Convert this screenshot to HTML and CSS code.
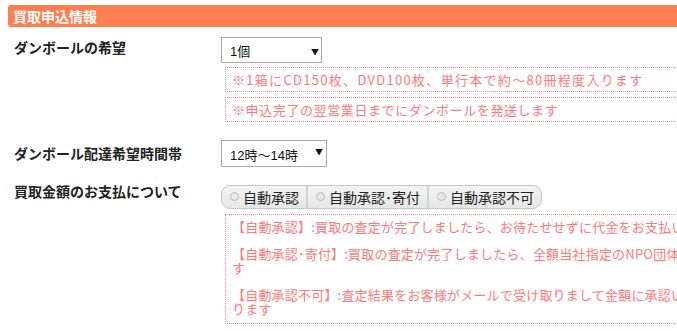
FILE: index.html
```html
<!DOCTYPE html>
<html lang="ja">
<head>
    <meta charset="UTF-8">
    <title>買取申込情報</title>
    <link rel="stylesheet" href="styles.css">
</head>
<body>
    <div class="form">
        <h3 class="form-title">買取申込情報</h3>

        <!-- ダンボール -->
        <div class="row row-box">
            <div class="label">ダンボールの希望</div>
            <div class="field">
                <div class="select select-count">
                    <select>
                        <option>1個</option>
                        <option>2個</option>
                        <option>3個</option>
                    </select>
                </div>
                <p class="note note-wide">※1箱にCD150枚、DVD100枚、単行本で約～80冊程度入ります</p>
                <p class="note">※申込完了の翌営業日までにダンボールを発送します</p>
            </div>
        </div>

        <!-- 配達時間 -->
        <div class="row row-time">
            <div class="label">ダンボール配達希望時間帯</div>
            <div class="field">
                <div class="select select-time">
                    <select>
                        <option>12時～14時</option>
                        <option>14時～16時</option>
                    </select>
                </div>
            </div>
        </div>

        <!-- お支払 -->
        <div class="row row-pay">
            <div class="label">買取金額のお支払について</div>
            <div class="field">
                <div class="choice">
                    <label class="choice-item"><span class="radio"></span>自動承認</label>
                    <label class="choice-item"><span class="radio"></span>自動承認･寄付</label>
                    <label class="choice-item"><span class="radio"></span>自動承認不可</label>
                </div>
                <div class="note note-pay">
                    <p>【自動承認】:買取の査定が完了しましたら、お待たせせずに代金をお支払いいたします</p>
                    <p>【自動承認･寄付】:買取の査定が完了しましたら、全額当社指定のNPO団体へ寄付いたしま<br>す</p>
                    <p>【自動承認不可】:査定結果をお客様がメールで受け取りまして金額に承認いただいてからお支払いとな<br>ります</p>
                </div>
            </div>
        </div>
    </div>
</body>
</html>
```

FILE: styles.css
```css
html {
    overflow-x: hidden;
}
body {
    margin: 0;
    font-family: "Noto Sans CJK JP", sans-serif;
    color: #222;
    background: #fff;
}
.form {
    width: 900px;
    padding: 5px 0 0 8px;
}
.form-title {
    margin: 0;
    height: 22px;
    line-height: 22px;
    padding-left: 5px;
    background: #ff7f50;
    border-radius: 3px;
    color: #fff;
    font-size: 14px;
    font-weight: bold;
}
.row {
    display: flex;
}
.row-box { margin-top: 10px; }
.row-time { margin-top: 18px; }
.row-pay { margin-top: 15px; }
.label {
    width: 207px;
    padding-left: 6px;
    font-size: 14px;
    font-weight: bold;
    line-height: 18px;
    flex-shrink: 0;
}
.row-box .label { padding-top: 1px; }
.row-time .label { padding-top: 4px; }
.field {
    flex: 1;
}

/* select */
.select {
    position: relative;
}
.select select {
    -webkit-appearance: none;
    appearance: none;
    display: block;
    box-sizing: border-box;
    border: 1px solid #a9a9a9;
    border-radius: 0;
    background: #fff;
    padding: 0 0 0 8px;
    font-family: "Liberation Sans", "Noto Sans CJK JP", sans-serif;
    font-size: 13px;
    color: #111;
}
.select-count select { width: 101px; height: 26px; padding-top: 2px; }
.select-time select { width: 106px; height: 27px; padding-top: 3px; }
.select::after {
    content: "▼";
    position: absolute;
    top: 8px;
    font-size: 8px;
    color: #111;
    pointer-events: none;
}
.select-count::after { left: 90px; top: 9px; }
.select-time::after { left: 94px; top: 6px; }

/* notes */
.note {
    margin: 5px 0 0 4px;
    border: 1px dotted #ff8585;
    padding: 0 6px;
    line-height: 23px;
    font-size: 13px;
    color: #ff7a7a;
    letter-spacing: 0.6px;
    white-space: nowrap;
}
.note-wide {
    letter-spacing: 1.3px;
}
.row-box .select + .note { margin-top: 4px; }
.note-pay {
    padding: 5px 6px 7px;
    line-height: 14px;
    letter-spacing: 0.2px;
}
.note-pay p {
    margin: 0;
}
.note-pay p + p {
    margin-top: 13px;
}

/* payment choice */
.choice {
    display: inline-flex;
    height: 24px;
    box-sizing: border-box;
    border: 1px solid #c8c8c8;
    border-radius: 9px;
    background: linear-gradient(#f3f3f3, #e6e6e6);
    overflow: hidden;
}
.choice-item {
    display: flex;
    align-items: center;
    gap: 4px;
    padding: 0 7px 0 8px;
    font-size: 14px;
    color: #222;
}
.choice-item + .choice-item {
    border-left: 2px solid #d2d2d2;
}
.radio {
    width: 7px;
    height: 7px;
    border: 1px solid #b8b8b8;
    border-radius: 50%;
    background: #e8e8e8;
}
```
